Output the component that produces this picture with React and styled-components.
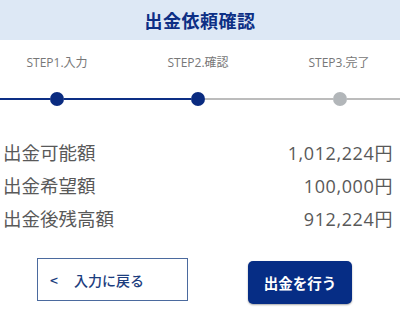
import React from 'react'
import styled, { createGlobalStyle } from 'styled-components'

const GlobalStyle = createGlobalStyle`
  body {
    margin: 0;
    background: #fff;
    font-family: "Noto Sans CJK JP", "Noto Sans", sans-serif;
  }
`

const Page = styled.div`
  width: 400px;
  height: 309px;
  overflow: hidden;
  background: #fff;
`
const Header = styled.div`
  height: 40px;
  background: #dde8f5;
  display: flex;
  align-items: center;
  justify-content: center;
`
const Title = styled.h1`
  margin: 0;
  font-size: 18px;
  font-weight: 700;
  color: #0d2f85;
  letter-spacing: 0.5px;
`
const StepLabels = styled.div`
  display: flex;
  gap: 41px;
  padding-left: 7px;
  margin-top: 14px;
  height: 18px;
`
const StepLabel = styled.div`
  width: 100px;
  text-align: center;
  font-family: "Open Sans", "Noto Sans CJK JP", sans-serif;
  font-size: 12px;
  line-height: 18px;
  color: #777;
`
const Track = styled.div`
  display: flex;
  align-items: center;
  height: 14px;
  margin-top: 20px;
`
const Seg = styled.div`
  height: 2px;
  background: ${p => (p.$done ? '#0d2f85' : '#bcbcbc')};
  flex: ${p => (p.$w ? `0 0 ${p.$w}px` : '1')};
`
const Dot = styled.div`
  width: 14px;
  height: 14px;
  border-radius: 50%;
  background: ${p => (p.$done ? '#0a2b80' : '#b2b6b9')};
  flex: 0 0 14px;
`
const Rows = styled.div`
  margin-top: 29px;
  padding: 0 7px 0 3px;
`
const Row = styled.div`
  display: flex;
  justify-content: space-between;
  align-items: center;
  height: 33px;
  font-family: "Open Sans", "Noto Sans CJK JP", sans-serif;
  font-size: 18.5px;
  color: #595959;
`
const Value = styled.span`
  font-size: 18px;
  letter-spacing: 0.6px;
`
const Buttons = styled.div`
  display: flex;
  align-items: flex-start;
  margin-top: 24px;
  padding-left: 37px;
  gap: 60px;
`
const BackButton = styled.button`
  width: 151px;
  height: 43px;
  border: 1px solid #4b6a9e;
  background: #fff;
  color: #1c3d7e;
  font-family: inherit;
  font-size: 14px;
  font-weight: 500;
  text-align: left;
  padding: 0 0 0 12px;
  display: flex;
  align-items: center;
  gap: 16px;
  cursor: pointer;
`
const SubmitButton = styled.button`
  margin-top: 3px;
  width: 104px;
  height: 43px;
  border: none;
  border-radius: 5px;
  background: #062d85;
  color: #fff;
  font-family: inherit;
  font-size: 14.5px;
  font-weight: 700;
  box-shadow: 0 1px 2px rgba(0, 0, 0, 0.35);
  cursor: pointer;
`

const steps = ['STEP1.入力', 'STEP2.確認', 'STEP3.完了']
const rows = [
  ['出金可能額', '1,012,224円'],
  ['出金希望額', '100,000円'],
  ['出金後残高額', '912,224円'],
]

const App = () => {
  return (
    <Page>
      <GlobalStyle />
      <Header>
        <Title>出金依頼確認</Title>
      </Header>
      <StepLabels>
        {steps.map(s => (
          <StepLabel key={s}>{s}</StepLabel>
        ))}
      </StepLabels>
      <Track>
        <Seg $done $w={50} />
        <Dot $done />
        <Seg $done $w={127} />
        <Dot $done />
        <Seg $w={128} />
        <Dot />
        <Seg />
      </Track>
      <Rows>
        {rows.map(([k, v]) => (
          <Row key={k}>
            <span>{k}</span>
            <Value>{v}</Value>
          </Row>
        ))}
      </Rows>
      <Buttons>
        <BackButton>
          <span>&lt;</span>
          <span>入力に戻る</span>
        </BackButton>
        <SubmitButton>出金を行う</SubmitButton>
      </Buttons>
    </Page>
  )
}

export default App
